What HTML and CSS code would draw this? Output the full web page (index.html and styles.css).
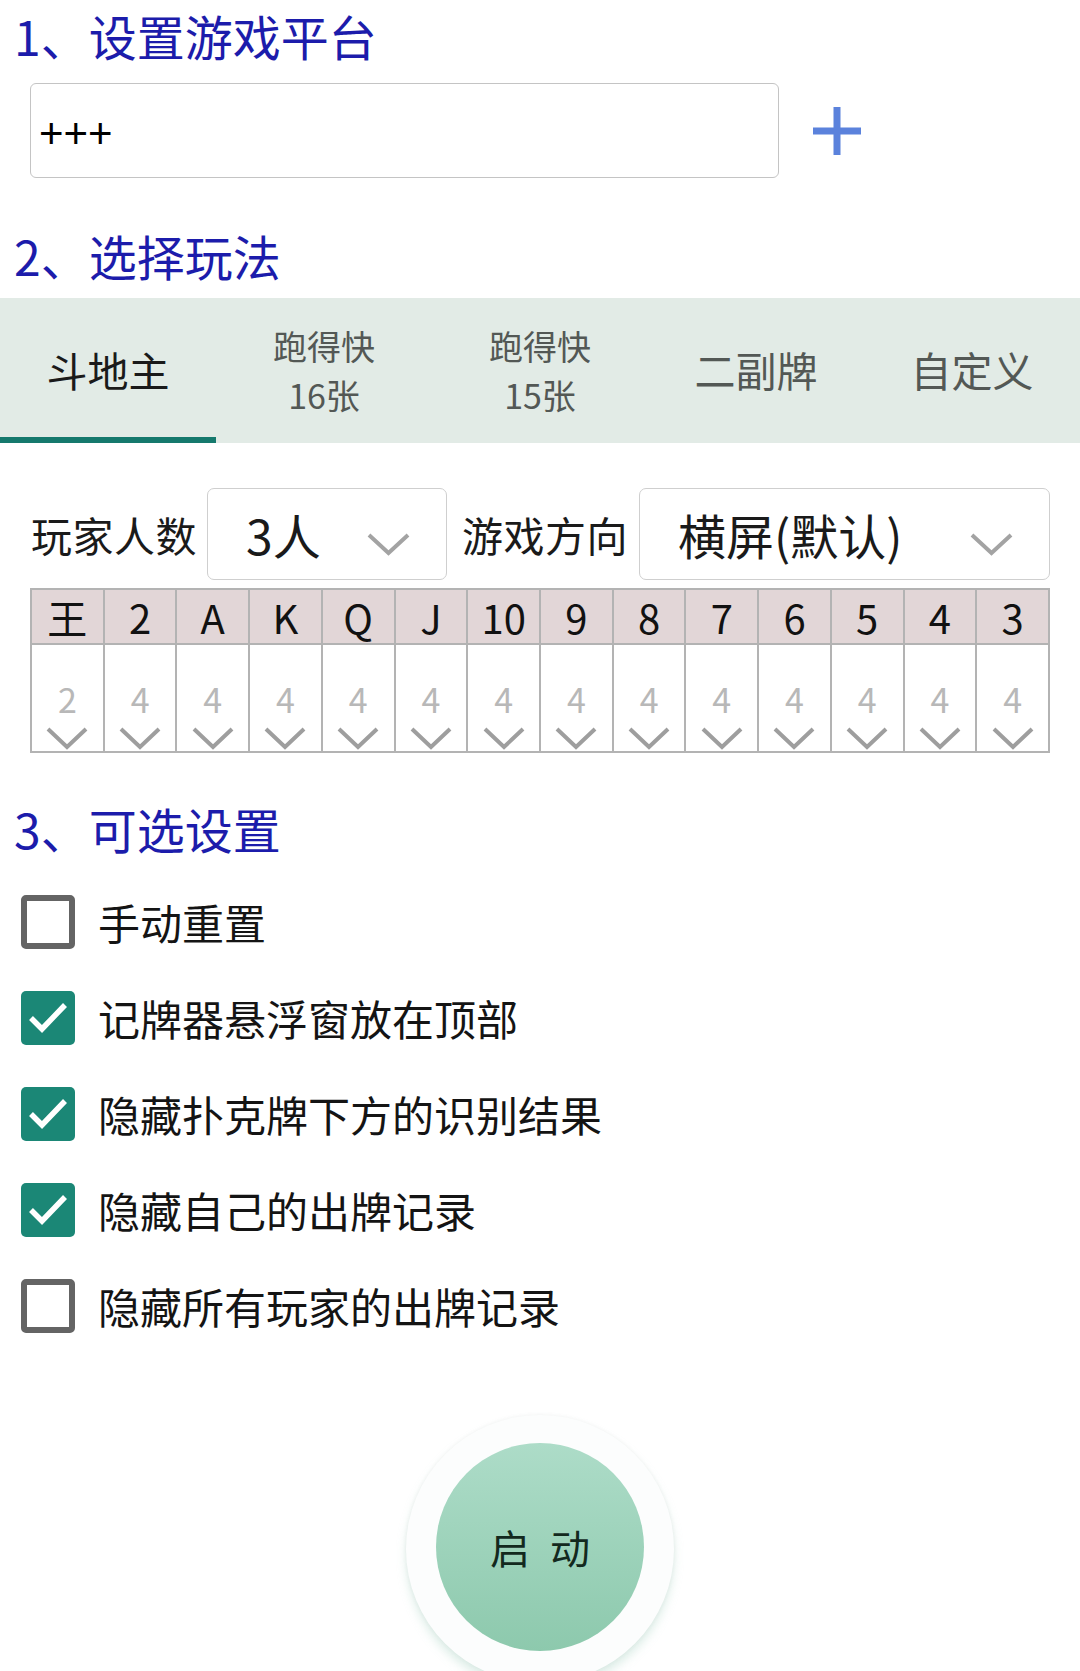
FILE: index.html
```html
<!DOCTYPE html>
<html lang="zh-CN">
<head>
<meta charset="utf-8">
<title>设置</title>
<link rel="stylesheet" href="styles.css">
</head>
<body>
<div class="page">
  <h2 class="sec-title t1">1、设置游戏平台</h2>
  <div class="platform-row">
    <div class="platform-input">+++</div>
    <svg class="add-icon" width="50" height="50" viewBox="0 0 50 50"><path d="M25 1V49M1 25H49" stroke="#5b82dc" stroke-width="7" fill="none"/></svg>
  </div>

  <h2 class="sec-title t2">2、选择玩法</h2>
  <div class="tabs">
    <div class="tab active"><span>斗地主</span></div>
    <div class="tab small"><span>跑得快</span><span>16张</span></div>
    <div class="tab small"><span>跑得快</span><span>15张</span></div>
    <div class="tab"><span>二副牌</span></div>
    <div class="tab"><span>自定义</span></div>
  </div>

  <div class="select-row">
    <span class="sel-label">玩家人数</span>
    <div class="select s1"><span class="sel-val">3人</span><svg class="chev" width="43" height="23" viewBox="0 0 43 23"><polyline points="2,2 21.5,20 41,2" fill="none" stroke="#a3a3a3" stroke-width="4"/></svg></div>
    <span class="sel-label">游戏方向</span>
    <div class="select s2"><span class="sel-val">横屏(默认)</span><svg class="chev" width="43" height="23" viewBox="0 0 43 23"><polyline points="2,2 21.5,20 41,2" fill="none" stroke="#a3a3a3" stroke-width="4"/></svg></div>
  </div>

  <div class="cards">
    <div class="ch">王</div><div class="ch">2</div><div class="ch">A</div><div class="ch">K</div><div class="ch">Q</div><div class="ch">J</div><div class="ch">10</div><div class="ch">9</div><div class="ch">8</div><div class="ch">7</div><div class="ch">6</div><div class="ch">5</div><div class="ch">4</div><div class="ch">3</div>
    <div class="cb"><span>2</span><svg width="42" height="23" viewBox="0 0 42 23"><polyline points="2,2 21,20 40,2" fill="none" stroke="#9e9e9e" stroke-width="4"/></svg></div>
    <div class="cb"><span>4</span><svg width="42" height="23" viewBox="0 0 42 23"><polyline points="2,2 21,20 40,2" fill="none" stroke="#9e9e9e" stroke-width="4"/></svg></div>
    <div class="cb"><span>4</span><svg width="42" height="23" viewBox="0 0 42 23"><polyline points="2,2 21,20 40,2" fill="none" stroke="#9e9e9e" stroke-width="4"/></svg></div>
    <div class="cb"><span>4</span><svg width="42" height="23" viewBox="0 0 42 23"><polyline points="2,2 21,20 40,2" fill="none" stroke="#9e9e9e" stroke-width="4"/></svg></div>
    <div class="cb"><span>4</span><svg width="42" height="23" viewBox="0 0 42 23"><polyline points="2,2 21,20 40,2" fill="none" stroke="#9e9e9e" stroke-width="4"/></svg></div>
    <div class="cb"><span>4</span><svg width="42" height="23" viewBox="0 0 42 23"><polyline points="2,2 21,20 40,2" fill="none" stroke="#9e9e9e" stroke-width="4"/></svg></div>
    <div class="cb"><span>4</span><svg width="42" height="23" viewBox="0 0 42 23"><polyline points="2,2 21,20 40,2" fill="none" stroke="#9e9e9e" stroke-width="4"/></svg></div>
    <div class="cb"><span>4</span><svg width="42" height="23" viewBox="0 0 42 23"><polyline points="2,2 21,20 40,2" fill="none" stroke="#9e9e9e" stroke-width="4"/></svg></div>
    <div class="cb"><span>4</span><svg width="42" height="23" viewBox="0 0 42 23"><polyline points="2,2 21,20 40,2" fill="none" stroke="#9e9e9e" stroke-width="4"/></svg></div>
    <div class="cb"><span>4</span><svg width="42" height="23" viewBox="0 0 42 23"><polyline points="2,2 21,20 40,2" fill="none" stroke="#9e9e9e" stroke-width="4"/></svg></div>
    <div class="cb"><span>4</span><svg width="42" height="23" viewBox="0 0 42 23"><polyline points="2,2 21,20 40,2" fill="none" stroke="#9e9e9e" stroke-width="4"/></svg></div>
    <div class="cb"><span>4</span><svg width="42" height="23" viewBox="0 0 42 23"><polyline points="2,2 21,20 40,2" fill="none" stroke="#9e9e9e" stroke-width="4"/></svg></div>
    <div class="cb"><span>4</span><svg width="42" height="23" viewBox="0 0 42 23"><polyline points="2,2 21,20 40,2" fill="none" stroke="#9e9e9e" stroke-width="4"/></svg></div>
    <div class="cb"><span>4</span><svg width="42" height="23" viewBox="0 0 42 23"><polyline points="2,2 21,20 40,2" fill="none" stroke="#9e9e9e" stroke-width="4"/></svg></div>
  </div>

  <h2 class="sec-title t3">3、可选设置</h2>
  <div class="options">
    <div class="opt"><span class="box"></span><span class="opt-text">手动重置</span></div>
    <div class="opt"><span class="box checked"><svg width="54" height="54" viewBox="0 0 54 54"><polyline points="10,27 21,38 44,14" fill="none" stroke="#fff" stroke-width="5.5"/></svg></span><span class="opt-text">记牌器悬浮窗放在顶部</span></div>
    <div class="opt"><span class="box checked"><svg width="54" height="54" viewBox="0 0 54 54"><polyline points="10,27 21,38 44,14" fill="none" stroke="#fff" stroke-width="5.5"/></svg></span><span class="opt-text">隐藏扑克牌下方的识别结果</span></div>
    <div class="opt"><span class="box checked"><svg width="54" height="54" viewBox="0 0 54 54"><polyline points="10,27 21,38 44,14" fill="none" stroke="#fff" stroke-width="5.5"/></svg></span><span class="opt-text">隐藏自己的出牌记录</span></div>
    <div class="opt"><span class="box"></span><span class="opt-text">隐藏所有玩家的出牌记录</span></div>
  </div>

  <div class="start-wrap">
    <div class="halo">
      <div class="start-btn">启动</div>
    </div>
  </div>
</div>
</body>
</html>
```

FILE: styles.css
```css
html, body {
  margin: 0;
  padding: 0;
  overflow: hidden;
  background: #ffffff;
}
body {
  font-family: "Noto Sans CJK SC", "Noto Sans", sans-serif;
  color: #111;
}
.page {
  width: 1080px;
  height: 1671px;
  overflow: hidden;
}
.sec-title {
  margin: 0;
  padding-left: 14px;
  font-size: 48px;
  font-weight: normal;
  line-height: 62px;
  color: #1c1cab;
}
.t1 {
  margin-top: 0;
  line-height: 70px;
}
.t2 { margin-top: 46px; }
.t3 { margin-top: 44px; }

.platform-row {
  margin-top: 13px;
  display: flex;
  align-items: center;
  padding-left: 30px;
  gap: 33px;
}
.platform-input {
  width: 747px;
  height: 87px;
  padding-top: 6px;
  border: 1px solid #c4c4c4;
  border-radius: 6px;
  box-sizing: content-box;
  display: flex;
  align-items: center;
  font-family: "Liberation Sans", sans-serif;
  font-size: 42px;
  color: #000;
  text-indent: 8px;
}
.add-icon { display: block; }

.tabs {
  margin-top: 12px;
  height: 145px;
  background: #e2ebe6;
  display: grid;
  grid-template-columns: repeat(5, 1fr);
}
.tab {
  display: flex;
  flex-direction: column;
  align-items: center;
  justify-content: center;
  padding-top: 4px;
  font-size: 41px;
  line-height: 49px;
  color: #535855;
  box-sizing: border-box;
  border-bottom: 6px solid transparent;
}
.tab.small {
  font-size: 34px;
  line-height: 49px;
}
.tab.active {
  color: #1a1a1a;
  border-bottom-color: #15796d;
}

.select-row {
  margin-top: 45px;
  display: flex;
  align-items: center;
  padding-left: 31px;
}
.sel-label {
  font-size: 41px;
  letter-spacing: 0.5px;
  line-height: 50px;
  color: #1a1a1a;
  width: 162px;
  white-space: nowrap;
}
.select {
  height: 92px;
  border: 1px solid #cfcfcf;
  border-radius: 7px;
  display: flex;
  align-items: center;
  justify-content: space-between;
  padding: 0 36px 0 38px;
  box-sizing: border-box;
}
.select.s1 { width: 240px; margin-left: 14px; margin-right: 15px; }
.select.s2 { width: 411px; margin-left: 15px; }
.sel-val {
  font-size: 48px;
  line-height: 56px;
  color: #1a1a1a;
  white-space: nowrap;
}
.chev {
  display: block;
  margin-top: 20px;
  flex-shrink: 0;
  filter: blur(0.5px);
}

.cards {
  margin: 8px 30px 0 30px;
  display: grid;
  grid-template-columns: repeat(14, 1fr);
  grid-template-rows: 55px 108px;
  border-top: 2px solid #b3b3b3;
  border-left: 2px solid #b3b3b3;
}
.ch, .cb {
  border-right: 2px solid #b3b3b3;
  border-bottom: 2px solid #b3b3b3;
  box-sizing: border-box;
}
.ch {
  background: #e2d6d7;
  display: flex;
  align-items: center;
  justify-content: center;
  font-size: 40px;
  color: #111;
}
.cb {
  display: flex;
  flex-direction: column;
  align-items: center;
  padding-top: 34px;
}
.cb span {
  font-size: 34px;
  line-height: 40px;
  color: #b8b8b8;
}
.cb svg {
  display: block;
  margin-top: 8px;
  filter: blur(0.5px);
}

.options {
  margin-top: 15px;
  display: flex;
  flex-direction: column;
}
.opt {
  height: 96px;
  display: flex;
  align-items: center;
  padding-left: 21px;
  gap: 23px;
}
.box {
  width: 54px;
  height: 54px;
  box-sizing: border-box;
  border: 6px solid #646464;
  border-radius: 5px;
  display: block;
}
.box.checked {
  border: none;
  background: #1b8776;
  overflow: hidden;
}
.box svg { display: block; }
.opt-text {
  font-size: 42px;
  line-height: 54px;
  color: #141414;
}

.start-wrap {
  margin-top: 61px;
  display: flex;
  justify-content: center;
}
.halo {
  width: 268px;
  height: 268px;
  border-radius: 50%;
  background: #fcfdfd;
  box-shadow: 0 7px 10px rgba(160, 205, 188, 0.35), 0 0 4px rgba(0, 0, 0, 0.05);
  display: flex;
  align-items: center;
  justify-content: center;
}
.start-btn {
  width: 208px;
  height: 208px;
  margin-top: -4px;
  border-radius: 50%;
  background: linear-gradient(#addcc8, #8dc9ad);
  display: flex;
  align-items: center;
  justify-content: center;
  font-size: 40px;
  letter-spacing: 20px;
  padding-left: 20px;
  box-sizing: border-box;
  color: #13291e;
}
```
